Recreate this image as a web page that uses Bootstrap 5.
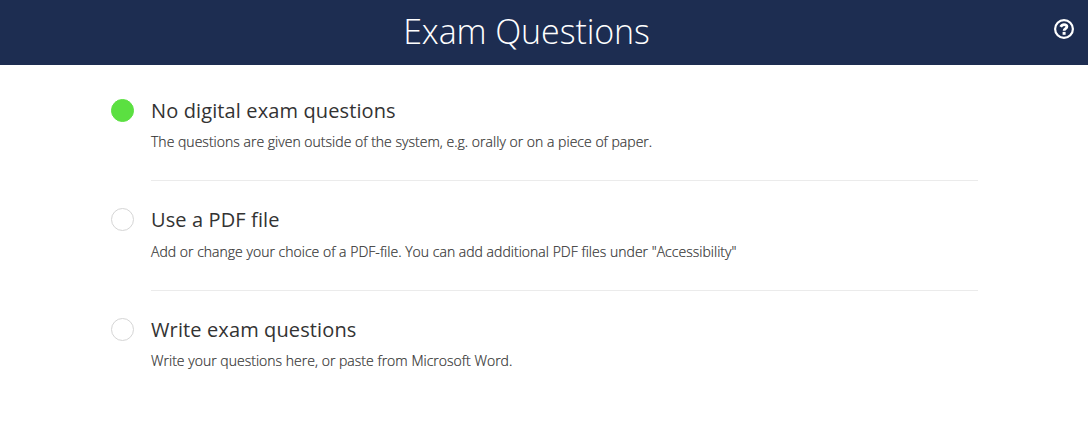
<!DOCTYPE html>
<html lang="en">
<head>
  <meta charset="UTF-8" />
  <meta name="viewport" content="width=device-width, initial-scale=1.0"/>
  <title>Exam Questions</title>
  <link href="https://cdn.jsdelivr.net/npm/bootstrap@5.3.0/dist/css/bootstrap.min.css" rel="stylesheet" />
  <style>
    body {
      font-family: "Open Sans", sans-serif;
      color: #333;
      background-color: #fff;
    }
    .page-header {
      height: 65px;
      padding-right: 35px;
      padding-bottom: 3px;
      background-color: #1d2d51;
      color: #fff;
    }
    .page-header h1 {
      font-size: 34px;
      font-weight: 300;
      line-height: 48px;
      letter-spacing: -0.1px;
    }
    .help-link {
      width: 22px;
      height: 22px;
      right: 13px;
      top: 18px;
    }
    .question-options {
      margin-left: 111px;
      margin-right: 110px;
      padding-top: 29.9px;
    }
    .option-item {
      height: 109.5px;
      gap: 17px;
    }
    .option-radio {
      width: 23px;
      height: 23px;
      margin: 3.9px 0 0;
      border-color: #d5d5d5;
      background-image: none !important;
    }
    .option-radio:checked {
      background-color: #5be041;
      border-color: #5be041;
    }
    .option-text {
      height: 86.2px;
      border-bottom: 1px solid #ebebeb;
    }
    .option-item:last-child .option-text {
      border-bottom: 0;
    }
    .option-title {
      margin-bottom: 5.2px;
      font-size: 20px;
      font-weight: 400;
      line-height: 32px;
      letter-spacing: 0.12px;
    }
    .option-info {
      font-size: 14px;
      font-weight: 300;
      line-height: 20px;
      letter-spacing: 0.02px;
      -webkit-text-stroke: 0.2px #333;
    }
  </style>
</head>
<body>

  <!-- Header -->
  <header class="page-header position-relative d-flex justify-content-center align-items-center">
    <h1 class="mb-0">Exam Questions</h1>
    <a href="#" class="help-link position-absolute d-block text-white" aria-label="Help">
      <svg class="d-block" width="22" height="22" viewBox="0 0 22 22" fill="none" stroke="currentColor">
        <circle cx="11" cy="11" r="8.9" stroke-width="2.2"/>
        <path d="M7.7 8.9C8.5 7.3 9.5 6.6 11 6.6c1.7 0 2.9.9 2.9 2.2 0 1.9-2.8 1.8-2.8 4" stroke-width="2.8"/>
        <path d="M11.1 13.9v2.9" stroke-width="3"/>
      </svg>
    </a>
  </header>

  <!-- Question options -->
  <form class="question-options">
    <div class="option-item d-flex">
      <input class="form-check-input option-radio flex-shrink-0" type="radio" name="question" id="noDigital" checked>
      <label class="option-text flex-grow-1" for="noDigital">
        <span class="option-title d-block">No digital exam questions</span>
        <span class="option-info d-block">The questions are given outside of the system, e.g. orally or on a piece of paper.</span>
      </label>
    </div>
    <div class="option-item d-flex">
      <input class="form-check-input option-radio flex-shrink-0" type="radio" name="question" id="usePdf">
      <label class="option-text flex-grow-1" for="usePdf">
        <span class="option-title d-block">Use a PDF file</span>
        <span class="option-info d-block">Add or change your choice of a PDF-file. You can add additional PDF files under "Accessibility"</span>
      </label>
    </div>
    <div class="option-item d-flex">
      <input class="form-check-input option-radio flex-shrink-0" type="radio" name="question" id="writeQuestions">
      <label class="option-text flex-grow-1" for="writeQuestions">
        <span class="option-title d-block">Write exam questions</span>
        <span class="option-info d-block">Write your questions here, or paste from Microsoft Word.</span>
      </label>
    </div>
  </form>

  <!-- Bootstrap JS -->
  <script src="https://cdn.jsdelivr.net/npm/bootstrap@5.3.0/dist/js/bootstrap.bundle.min.js"></script>
</body>
</html>
